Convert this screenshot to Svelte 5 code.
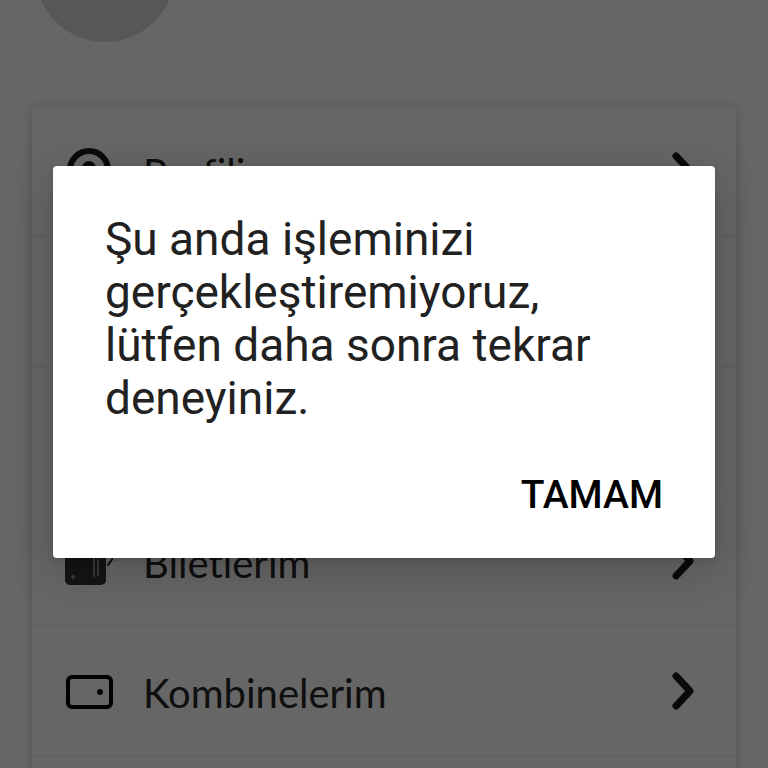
<script>
  const items = [
    { label: 'Profilim', icon: 'profile' },
    { label: '', icon: '' },
    { label: '', icon: '' },
    { label: 'Biletlerim', icon: 'ticket' },
    { label: 'Kombinelerim', icon: 'card' },
    { label: '', icon: '' }
  ];
  let open = $state(true);
</script>

<div class="screen">
  <main inert={open}>
    <div class="avatar"></div>
    <nav class="menu">
      {#each items as item}
        <div class="row">
          {#if item.label}
            <a href="#{item.icon}">
              <svg class="icon" width="48" height="48" viewBox="0 0 48 48" fill="none" stroke="#1a1a1a" stroke-width="4" stroke-linecap="round" stroke-linejoin="round" aria-hidden="true">
                {#if item.icon === 'profile'}
                  <circle cx="24" cy="22" r="19" stroke-width="6" />
                  <circle cx="24" cy="20" r="7" fill="#1a1a1a" stroke="none" />
                  <path d="M12 36c4-9 20-9 24 0" />
                {:else if item.icon === 'ticket'}
                  <path d="M43 27l5-7" stroke-width="2" />
                  <rect x="0" y="6" width="41" height="41" rx="5" fill="#2d3238" stroke="none" />
                  <path d="M29 20v18M33 22v15" stroke="#90959b" stroke-width="2" />
                  <circle cx="8" cy="39" r="2" fill="#90959b" stroke="none" />
                {:else}
                  <rect x="3" y="9" width="43" height="30" rx="4" stroke="#000" />
                  <circle cx="35" cy="24" r="3" fill="#000" stroke="none" />
                {/if}
              </svg>
              <span>{item.label}</span>
              <svg class="chevron" width="24" height="40" viewBox="0 0 24 40" fill="none" stroke="#1a1a1a" stroke-width="7" stroke-linecap="round" stroke-linejoin="round" aria-hidden="true">
                <path d="M4 4l14 15L4 34" />
              </svg>
            </a>
          {/if}
        </div>
      {/each}
    </nav>
  </main>

  {#if open}
    <div class="scrim">
      <div class="dialog" role="alertdialog" aria-modal="true" aria-describedby="message">
        <p id="message">Şu anda işleminizi gerçekleştiremiyoruz, lütfen daha sonra tekrar deneyiniz.</p>
        <button type="button" onclick={() => (open = false)}>TAMAM</button>
      </div>
    </div>
  {/if}
</div>

<style>
  .screen {
    position: relative;
    height: 100vh;
    overflow: hidden;
    background: #fff;
  }

  .avatar {
    width: 140px;
    height: 140px;
    margin: -98px 0 0 35px;
    border-radius: 50%;
    background: #dadada;
  }

  main {
    display: flow-root;
  }

  .menu {
    margin: 65px 32px 0;
    background: #fff;
    box-shadow: 0 2px 12px rgba(0, 0, 0, 0.22);
  }

  .row {
    box-sizing: border-box;
    height: 130px;
    border-bottom: 2px solid #f3f3f3;
  }

  a {
    box-sizing: border-box;
    display: flex;
    align-items: center;
    height: 100%;
    padding: 2px 40px 0 33px;
    color: #262626;
    font: 40px/48px Lato, sans-serif;
    font-variant-ligatures: none;
    text-decoration: none;
  }

  a span {
    flex: 1;
    margin-left: 30px;
    padding-top: 2px;
  }

  .scrim {
    position: absolute;
    inset: 0;
    display: flex;
    align-items: flex-start;
    padding: 166px 53px 0;
    background: rgba(0, 0, 0, 0.6);
  }

  .dialog {
    box-sizing: border-box;
    flex: 1;
    display: flex;
    flex-direction: column;
    align-items: flex-end;
    padding: 47px 52px 39px;
    border-radius: 4px;
    background: #fff;
    box-shadow: 0 12px 48px rgba(0, 0, 0, 0.2), 0 2px 6px rgba(0, 0, 0, 0.12);
    font-family: Roboto, sans-serif;
  }

  p {
    align-self: stretch;
    margin: 0 0 46px;
    color: #212121;
    font-size: 46px;
    line-height: 53px;
  }

  button {
    padding: 0;
    border: 0;
    background: none;
    color: #000;
    font: 500 39px/48px Roboto, sans-serif;
    cursor: pointer;
  }
</style>
